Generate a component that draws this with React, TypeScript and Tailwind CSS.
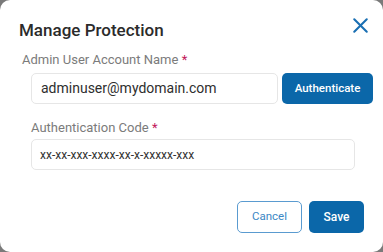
import { X } from 'lucide-react';

export default function App() {
  return (
    <div className="w-[383px] h-[252px] bg-[#7a7a7a] font-['Roboto',sans-serif]">
      <div className="h-full bg-white rounded-[10px] flex flex-col">
        {/* Header */}
        <div className="flex items-start justify-between pl-[19px] pr-[10px] pt-[18px]">
          <h2 className="text-[17px] leading-[24px] font-medium text-[#2b2b2b]">
            Manage Protection
          </h2>
          <X className="w-[25px] h-[25px] text-[#1a6fb3] -mt-[5px]" strokeWidth={2} />
        </div>

        {/* Account name */}
        <label className="mt-[10px] ml-[22px] text-[13px] leading-[16px] text-[#7b7b7b]">
          Admin User Account Name <span className="text-[#c2185b]">*</span>
        </label>
        <div className="flex gap-[4px] mt-[5px] ml-[31px] mr-[10px]">
          <div className="flex-1 h-[31px] border border-[#e6e6e6] rounded-[5px] flex items-center pl-[9px] text-[14px] text-[#2e2e2e]">
            adminuser@mydomain.com
          </div>
          <button className="w-[91px] h-[31px] rounded-[5px] bg-[#0b67a9] text-white text-[11.5px] font-medium">
            Authenticate
          </button>
        </div>

        {/* Code */}
        <label className="mt-[16px] ml-[31px] text-[13px] leading-[16px] text-[#7b7b7b]">
          Authentication Code <span className="text-[#c2185b]">*</span>
        </label>
        <div className="mt-[3px] ml-[31px] mr-[28px] h-[31px] border border-[#e6e6e6] rounded-[5px] flex items-center pl-[8px] text-[12px] text-[#333]">
          xx-xx-xxx-xxxx-xx-x-xxxxx-xxx
        </div>

        {/* Footer */}
        <div className="flex justify-end gap-[7px] mt-[31px] mr-[19px]">
          <button className="w-[65px] h-[32px] rounded-[5px] border border-[#5a9bd0] text-[#3b87c4] text-[11.5px]">
            Cancel
          </button>
          <button className="w-[55px] h-[32px] rounded-[5px] bg-[#0b67a9] text-white text-[12px] font-medium">
            Save
          </button>
        </div>
      </div>
    </div>
  );
}
